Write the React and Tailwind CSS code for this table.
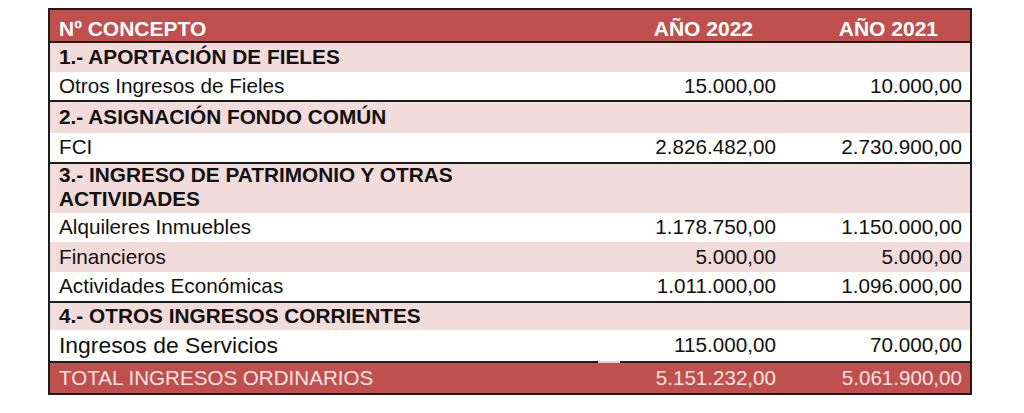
import React from 'react';

const rows = [
  { kind: 'section', label: '1.- APORTACIÓN DE FIELES', h: 'h-[29px]' },
  { kind: 'item', label: 'Otros Ingresos de Fieles', a: '15.000,00', b: '10.000,00', h: 'h-[30px]', line: true },
  { kind: 'section', label: '2.- ASIGNACIÓN FONDO COMÚN', h: 'h-[31px]' },
  { kind: 'item', label: 'FCI', a: '2.826.482,00', b: '2.730.900,00', h: 'h-[31px]', line: true },
  { kind: 'section', label: '3.- INGRESO DE PATRIMONIO Y OTRAS', label2: 'ACTIVIDADES', h: 'h-[49px]' },
  { kind: 'item', label: 'Alquileres Inmuebles', a: '1.178.750,00', b: '1.150.000,00', h: 'h-[29px]' },
  { kind: 'item', pink: true, label: 'Financieros', a: '5.000,00', b: '5.000,00', h: 'h-[30px]' },
  { kind: 'item', label: 'Actividades Económicas', a: '1.011.000,00', b: '1.096.000,00', h: 'h-[31px]', line: true },
  { kind: 'section', label: '4.- OTROS INGRESOS CORRIENTES', h: 'h-[27px]' },
  { kind: 'item', big: true, label: 'Ingresos de Servicios', a: '115.000,00', b: '70.000,00', h: 'h-[33px]', line: true, mark: true },
];

const Row = ({ row }) => {
  const bg = row.kind === 'section' || row.pink ? 'bg-[#f2dcdb]' : 'bg-white';
  const border = row.line ? 'border-b-2 border-[#1c1c1c]' : '';

  if (row.kind === 'section') {
    return (
      <div className={`${row.h} ${bg} ${border} flex ${row.label2 ? 'items-start' : 'items-center'} pl-[9px] font-bold text-[20.8px] text-[#111]`}>
        {row.label2 ? (
          <div className="leading-[24px] -mt-[1px]">
            {row.label}
            <br />
            {row.label2}
          </div>
        ) : (
          <span className="leading-none">{row.label}</span>
        )}
      </div>
    );
  }

  return (
    <div className={`relative ${row.h} ${bg} ${border} grid grid-cols-[548px_186px_186px] items-center text-[20.7px] text-[#111] leading-none`}>
      <span className={`pl-[9px] ${row.big ? 'text-[22.9px]' : ''}`}>{row.label}</span>
      <span className="text-right pr-[8px]">{row.a}</span>
      <span className="text-right pr-[8px]">{row.b}</span>
      {row.mark && (
        <span className="absolute left-[548px] -bottom-[2px] w-[22px] h-[2px] bg-[#efc9c7]" />
      )}
    </div>
  );
};

const App = () => {
  return (
    <div className="w-[1024px] h-[413px] bg-white overflow-hidden" style={{ fontFamily: '"Liberation Sans", Arial, sans-serif' }}>
      <div className="ml-[48px] mt-[8px] w-[924px] border-2 border-[#1c1c1c]">
        {/* Header */}
        <div className="h-[33px] bg-[#c0504d] border-b-2 border-[#1c1c1c] grid grid-cols-[548px_186px_186px] items-center pt-[5px] text-white font-bold text-[21px] leading-none">
          <span className="pl-[9px]">Nº CONCEPTO</span>
          <span className="text-right pr-[31px]">AÑO 2022</span>
          <span className="text-right pr-[32px]">AÑO 2021</span>
        </div>

        {rows.map((row, idx) => (
          <Row key={idx} row={row} />
        ))}

        {/* Total */}
        <div className="h-[30px] bg-[#c0504d] grid grid-cols-[548px_186px_186px] items-center text-[#f6e2e1] text-[20.6px] leading-none">
          <span className="pl-[9px]">TOTAL INGRESOS ORDINARIOS</span>
          <span className="text-right pr-[8px]">5.151.232,00</span>
          <span className="text-right pr-[8px]">5.061.900,00</span>
        </div>
      </div>
    </div>
  );
};

export default App;
